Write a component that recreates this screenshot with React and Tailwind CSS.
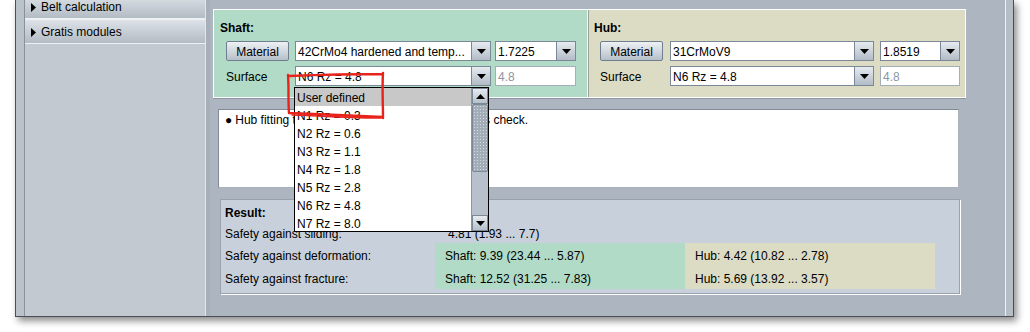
import React from "react";

const DownTri = () => (
  <svg width="9" height="5" viewBox="0 0 9 5">
    <path d="M0 0H9L4.5 5Z" fill="#000" />
  </svg>
);

const UpTri = () => (
  <svg width="9" height="5" viewBox="0 0 9 5">
    <path d="M0 5H9L4.5 0Z" fill="#000" />
  </svg>
);

const RightTri = () => (
  <svg width="5" height="9" viewBox="0 0 5 9">
    <path d="M0 0V9L5 4.5Z" fill="#000" />
  </svg>
);

const Combo = ({ value, className }) => (
  <div className={`flex h-5 ${className}`}>
    <div className="flex-1 min-w-0 bg-white border border-r-0 border-[#7a8898] pl-[2px] pt-[1px] leading-[18px] whitespace-nowrap overflow-hidden">
      {value}
    </div>
    <div className="w-[20px] flex items-center justify-center border border-[#7a8898] bg-gradient-to-b from-[#e6ebf0] to-[#b2bcc7]">
      <DownTri />
    </div>
  </div>
);

const Field = ({ value, className }) => (
  <div className={`h-5 bg-white border border-[#a4aeb8] pl-[2px] pt-[1px] leading-[18px] text-[#8e969e] ${className}`}>
    {value}
  </div>
);

const MaterialButton = () => (
  <div className="w-[63px] h-5 flex items-center justify-center pt-[1px] rounded-[2px] border border-[#6f7f8f] bg-gradient-to-b from-[#eef1f4] to-[#b6c0ca]">
    Material
  </div>
);

const SidebarHeader = ({ title, className }) => (
  <div className={`h-[25px] flex items-center gap-[5px] pl-[6px] pt-[1px] border-t border-[#eef1f4] border-b border-[#939ca6] bg-gradient-to-b from-[#dde2e7] to-[#b3bbc4] ${className}`}>
    <RightTri />
    <span>{title}</span>
  </div>
);

const surfaces = [
  "User defined",
  "N1 Rz = 0.3",
  "N2 Rz = 0.6",
  "N3 Rz = 1.1",
  "N4 Rz = 1.8",
  "N5 Rz = 2.8",
  "N6 Rz = 4.8",
  "N7 Rz = 8.0",
];

export default function App() {
  return (
    <div className="relative w-[1030px] h-[332px] bg-white overflow-hidden text-[12px] text-black font-['Liberation_Sans',Arial,sans-serif]">
      {/* window */}
      <div className="ml-[15px] w-[999px] h-[317px] flex border-x border-b border-[#4b4f55] bg-[#adb6c0] shadow-[3px_4px_7px_rgba(0,0,0,0.45)]">
        <div className="w-[9px] bg-[#bac2ca] border-r border-[#89929c]" />

        {/* sidebar */}
        <div className="w-[181px] flex flex-col bg-[#c3c9d0] border-r border-[#e2e6ea]">
          <SidebarHeader title="Belt calculation" className="-mt-[6px]" />
          <SidebarHeader title="Gratis modules" />
        </div>
        <div className="w-[4px] bg-[#a7afb9]" />

        {/* main */}
        <div className="w-[795px] flex flex-col">
          {/* shaft / hub */}
          <div className="mt-[9px] ml-[3px] w-[753px] h-[89px] flex border border-white shadow-[0_1px_0_#8c96a0]">
            <div className="w-[373px] bg-[#b1dbc6] pl-[6px] pt-[10px]">
              <div className="font-bold leading-4">Shaft:</div>
              <div className="pl-[6px] mt-[5px] flex flex-col gap-[5px]">
                <div className="flex items-center">
                  <MaterialButton />
                  <Combo value="42CrMo4 hardened and temp..." className="ml-[6px] w-[196px]" />
                  <Combo value="1.7225" className="ml-[4px] w-[81px]" />
                </div>
                <div className="flex items-center">
                  <div className="w-[63px] pt-[1px]">Surface</div>
                  <Combo value="N6 Rz = 4.8" className="ml-[6px] w-[196px]" />
                  <Field value="4.8" className="ml-[4px] w-[81px]" />
                </div>
              </div>
            </div>
            <div className="w-[1px] bg-[#f4f6f2]" />
            <div className="w-[1px] bg-[#9aa39c]" />
            <div className="flex-1 bg-[#dcdcc4] pl-[5px] pt-[10px]">
              <div className="font-bold leading-4">Hub:</div>
              <div className="pl-[6px] mt-[5px] flex flex-col gap-[5px]">
                <div className="flex items-center">
                  <MaterialButton />
                  <Combo value="31CrMoV9" className="ml-[7px] w-[204px]" />
                  <Combo value="1.8519" className="ml-[6px] w-[80px]" />
                </div>
                <div className="flex items-center">
                  <div className="w-[63px] pt-[1px]">Surface</div>
                  <Combo value="N6 Rz = 4.8" className="ml-[7px] w-[204px]" />
                  <Field value="4.8" className="ml-[6px] w-[80px]" />
                </div>
              </div>
            </div>
          </div>

          {/* messages */}
          <div className="mt-[11px] ml-[8px] w-[741px] h-[79px] bg-white border border-[#7f8b97] border-r-[#a9b2bc] border-b-[#a9b2bc] pl-[6px] pt-[2px] leading-4">
            <span className="mr-[3px]">●</span>
            Hub fitting tolerances were not included into this check.
          </div>

          {/* result */}
          <div className="mt-[11px] ml-[10px] w-[740px] h-[95px] bg-[#c8d1db] border border-[#98a2ac] shadow-[1px_1px_0_#ffffff] pl-[4px] pt-[5px]">
            <div className="font-bold leading-4">Result:</div>
            <div className="mt-[1px] grid grid-cols-[210px_250px_250px]">
              <div className="h-[21px] leading-[21px] pt-[2px]">Safety against sliding:</div>
              <div className="h-[21px] leading-[21px] pt-[2px] pl-[13px]">4.81 (1.93 ... 7.7)</div>
              <div />
              <div className="h-[23px] leading-[23px] pt-[2px]">Safety against deformation:</div>
              <div className="h-[23px] leading-[23px] pt-[2px] pl-[10px] bg-[#b1dbc6]">Shaft: 9.39 (23.44 ... 5.87)</div>
              <div className="h-[23px] leading-[23px] pt-[2px] pl-[10px] bg-[#dcdcc4]">Hub: 4.42 (10.82 ... 2.78)</div>
              <div className="h-[23px] leading-[23px] pt-[2px]">Safety against fracture:</div>
              <div className="h-[23px] leading-[23px] pt-[2px] pl-[10px] bg-[#b1dbc6]">Shaft: 12.52 (31.25 ... 7.83)</div>
              <div className="h-[23px] leading-[23px] pt-[2px] pl-[10px] bg-[#dcdcc4]">Hub: 5.69 (13.92 ... 3.57)</div>
            </div>
          </div>
        </div>

        <div className="w-[8px] border-l border-[#eef1f4] bg-[#b5bdc5]" />
      </div>

      {/* open surface dropdown */}
      <div className="absolute left-[294px] top-[87px] w-[195px] h-[145px] flex border border-black bg-white">
        <div className="flex-1">
          {surfaces.map((s, i) => (
            <div
              key={s}
              className={i === 0 ? "h-[18px] leading-[18px] pt-[1px] pl-[2px] bg-[#c8c8c8]" : "h-[18px] leading-[18px] pt-[1px] pl-[2px]"}
            >
              {s}
            </div>
          ))}
        </div>
        <div className="w-[17px] flex flex-col bg-[#b8c1cb] border-l border-[#8d97a1]">
          <div className="h-[16px] flex items-center justify-center border border-[#7a8898] bg-gradient-to-b from-[#e6ebf0] to-[#b6c0ca]">
            <UpTri />
          </div>
          <div className="h-[68px] border border-[#7a8898] rounded-[2px] bg-[#a3adb8] bg-[radial-gradient(circle,#d4dae0_0.6px,transparent_0.8px)] bg-[length:3px_3px]" />
          <div className="flex-1" />
          <div className="h-[16px] flex items-center justify-center border border-[#7a8898] bg-gradient-to-b from-[#e6ebf0] to-[#b6c0ca]">
            <DownTri />
          </div>
        </div>
      </div>

      {/* red pen annotation */}
      <svg className="absolute left-[284px] top-[69px]" width="106" height="54" viewBox="0 0 106 54" fill="none">
        <path
          d="M5 7 C 30 6, 60 5, 99 5 M99 4 C 98 18, 99 34, 99 49 M99 48 C 70 47, 35 45, 5 44 M4 6 C 5 20, 4 32, 5 44"
          stroke="#e8231c"
          strokeWidth="2.4"
          strokeLinecap="round"
        />
        <path d="M8 46 C 40 47, 72 49, 97 49" stroke="#e8231c" strokeWidth="1.6" strokeLinecap="round" />
      </svg>
    </div>
  );
}
